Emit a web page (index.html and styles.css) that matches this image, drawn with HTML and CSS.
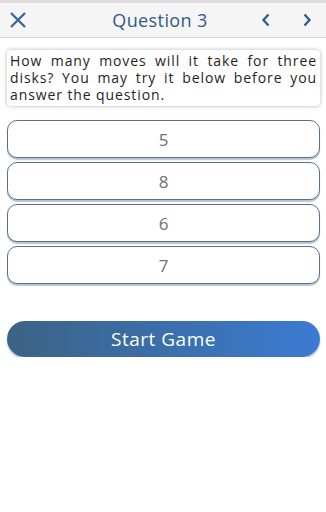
FILE: index.html
```html
<!DOCTYPE html>
<html lang="en">
<head>
    <meta charset="UTF-8">
    <meta name="viewport" content="width=device-width, initial-scale=1.0">
    <title>Question 3</title>
    <link rel="stylesheet" href="styles.css">
</head>
<body>
    <div class="topbar">
        <button class="icon-btn close" aria-label="Close">
            <svg width="18" height="18" viewBox="0 0 18 18"><path d="M2 2 L16 16 M16 2 L2 16" stroke="#3a6a9c" stroke-width="2.4" fill="none"/></svg>
        </button>
        <h1 class="title">Question 3</h1>
        <button class="icon-btn prev" aria-label="Previous">
            <svg width="10" height="14" viewBox="0 0 10 14"><path d="M7.5 1.5 L2.5 7 L7.5 12.5" stroke="#2f5f8f" stroke-width="2.4" fill="none"/></svg>
        </button>
        <button class="icon-btn next" aria-label="Next">
            <svg width="10" height="14" viewBox="0 0 10 14"><path d="M2.5 1.5 L7.5 7 L2.5 12.5" stroke="#2f5f8f" stroke-width="2.4" fill="none"/></svg>
        </button>
    </div>

    <div class="content">
        <p class="question">How many moves will it take for three disks? You may try it below before you answer the question.</p>

        <div class="answers">
            <button class="answer">5</button>
            <button class="answer">8</button>
            <button class="answer">6</button>
            <button class="answer">7</button>
        </div>

        <button class="start">Start Game</button>
    </div>
</body>
</html>
```

FILE: styles.css
```css
body { margin: 0; background: #fff; font-family: "Open Sans", Arial, sans-serif; }
button { font-family: inherit; cursor: pointer; }

.topbar { display: flex; align-items: center; height: 34px; background: #f5f5f6; border-top: 3px solid #dcdcde; border-bottom: 1px solid #d6d6d8; }
.icon-btn { background: none; border: none; padding: 0; display: flex; align-items: center; justify-content: center; }
.close { width: 18px; height: 18px; margin-left: 9px; }
.title { flex: 1; margin: 0; text-align: center; font-size: 18px; font-weight: 400; color: #2f5b88; letter-spacing: 0.4px; padding-left: 32px; }
.prev { width: 10px; margin-right: 31px; }
.next { width: 10px; margin-right: 14px; }

.content { padding: 12px 6px 0 7px; }
.question { margin: 0; padding: 2px 3px 3px 3px; background: #fff; border-radius: 4px; box-shadow: 0 0 4px rgba(0, 0, 0, 0.3); font-size: 14px; line-height: 17px; text-align: justify; color: #1e1e1e; letter-spacing: 0.9px; }

.answers { display: flex; flex-direction: column; gap: 4px; margin-top: 14px; }
.answer { height: 38px; background: #fff; border: 1px solid #56708e; border-radius: 10px; box-shadow: 0 2px 1px #b9c4d3; font-size: 17px; color: #707070; }

.start { display: block; width: 100%; height: 36px; margin-top: 37px; border: none; border-radius: 18px; background: linear-gradient(90deg, #3b6384, #3b7bd2); box-shadow: 0 2px 2px #b8c6d8; color: #fff; font-size: 19px; letter-spacing: 0.5px; }
```
